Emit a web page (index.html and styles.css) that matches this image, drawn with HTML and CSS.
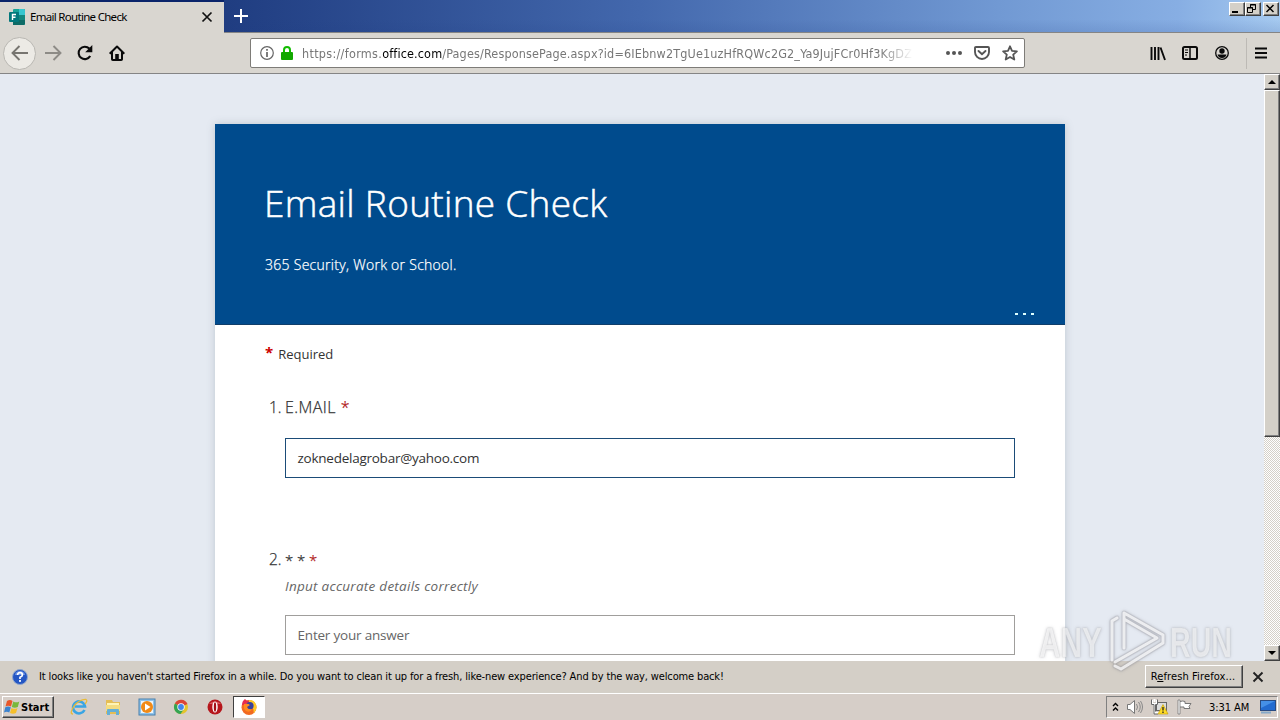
FILE: index.html
```html
<!DOCTYPE html>
<html lang="en">
<head>
<meta charset="utf-8">
<title>Email Routine Check</title>
<link rel="stylesheet" href="styles.css">
</head>
<body>
<div class="screen">
  <header class="tabbar">
    <div class="tab">
      <svg class="tab-icon" width="16" height="16" viewBox="0 0 16 16"><rect x="4" width="12" height="16" rx="1" fill="#17a398"/><path d="M10 0h5l1 1v5h-6z" fill="#37c6d0"/><path d="M10 6h6v5h-6z" fill="#13877f"/><path d="M4 11h12v4l-1 1H4z" fill="#0d6b66"/><rect y="3" width="10" height="10" rx="1" fill="#03787c"/><path d="M3.5 11V5.5H7M3.5 8.2h3" fill="none" stroke="#fff" stroke-width="1.4"/></svg>
      <span class="tab-title">Email Routine Check</span>
      <svg width="12" height="12" viewBox="0 0 12 12"><path d="M1.5 1.5l9 9m0-9l-9 9" stroke="#111" stroke-width="1.7"/></svg>
    </div>
    <svg class="new-tab" width="16" height="16" viewBox="0 0 16 16"><path d="M8 1v14M1 8h14" stroke="#fff" stroke-width="2"/></svg>
    <div class="window-buttons">
      <span class="win-btn"><svg width="12" height="11" viewBox="0 0 12 11"><path d="M2 9h6" stroke="#000" stroke-width="2"/></svg></span>
      <span class="win-btn"><svg width="12" height="11" viewBox="0 0 12 11"><path d="M4.5 4V1.5h5v5H7M4 2h6M1.5 4.5h5v5h-5zM1 5h6" fill="none" stroke="#000"/></svg></span>
      <span class="win-btn win-close"><svg width="12" height="11" viewBox="0 0 12 11"><path d="M2.5 2l7 7m0-7l-7 7" stroke="#000" stroke-width="1.5"/></svg></span>
    </div>
  </header>

  <nav class="toolbar">
    <div class="nav-buttons">
      <span class="back"><svg width="18" height="16" viewBox="0 0 18 16"><path d="M17 8H2m6.500-7L1.500 8l7 7" fill="none" stroke="#777570" stroke-width="1.900"/></svg></span>
      <svg width="18" height="16" viewBox="0 0 18 16"><path d="M1 8h15M9.500 1l7 7-7 7" fill="none" stroke="#8d8b86" stroke-width="1.900"/></svg>
      <svg width="16" height="16" viewBox="0 0 16 16"><path d="M13.200 11A6.200 6.200 0 1 1 12.300 3.600" fill="none" stroke="#0a0a0a" stroke-width="2.100"/><path d="M15.300 0v7.300H8.200z" fill="#0a0a0a"/></svg>
      <svg width="16" height="16" viewBox="0 0 16 16"><path d="M.7 8.800L8 1.500l7.300 7.300" fill="none" stroke="#0a0a0a" stroke-width="2" stroke-linejoin="round"/><path d="M3 7v7.200q0 .8.800.8h8.400q.8 0 .8-.8V7" fill="none" stroke="#0a0a0a" stroke-width="2"/><path d="M6.200 15V9h3.600v6z" fill="#0a0a0a"/></svg>
    </div>
    <div class="urlbar">
      <svg width="14" height="14" viewBox="0 0 14 14"><circle cx="7" cy="7" r="6.300" fill="none" stroke="#666" stroke-width="1.200"/><path d="M7 3v1.700M7 6v5" stroke="#666" stroke-width="1.700"/></svg>
      <svg width="12" height="14" viewBox="0 0 12 14"><path d="M3 7V4a3 3 0 0 1 6 0v3" fill="none" stroke="#12bc00" stroke-width="2"/><rect y="6" width="12" height="8" rx="1" fill="#12a800"/></svg>
      <span class="url"><span class="url-a">https://forms.</span><span class="domain">office.com</span><span class="url-b">/Pages/ResponsePage.aspx?id=6IEbnw2TgUe1uzHfRQWc2G2_Ya9JujFCr0Hf3KgDZ</span></span>
      <svg width="16" height="4" viewBox="0 0 16 4"><circle cx="2" cy="2" r="2" fill="#555"/><circle cx="8" cy="2" r="2" fill="#555"/><circle cx="14" cy="2" r="2" fill="#555"/></svg>
      <svg width="16" height="14" viewBox="0 0 16 14"><path d="M2 1h12q1 0 1 1v4a7 7 0 0 1-14 0V2q0-1 1-1z" fill="none" stroke="#555" stroke-width="1.900"/><path d="M4.500 5L8 8.300 11.500 5" fill="none" stroke="#555" stroke-width="1.900" stroke-linecap="round"/></svg>
      <svg width="16" height="16" viewBox="0 0 16 16"><path d="M8 1.300l2 4.500 4.900.5-3.700 3.300 1.100 4.900L8 12l-4.300 2.500 1.100-4.900L1.100 6.300 6 5.800z" fill="none" stroke="#555" stroke-width="1.800" stroke-linejoin="round"/></svg>
    </div>
    <div class="tools">
      <svg width="16" height="16" viewBox="0 0 16 16"><path d="M1.500 2v13M5 2v13M8.500 2v13M10.500 2.500L15 15" stroke="#0a0a0a" stroke-width="1.900"/></svg>
      <svg width="16" height="14" viewBox="0 0 16 14"><rect x="1" y="1" width="14" height="12" rx="1.500" fill="none" stroke="#0a0a0a" stroke-width="2"/><path d="M8 1v12" stroke="#0a0a0a" stroke-width="1.500"/><path d="M3 4h3M3 6.500h3M3 9h2" stroke="#0a0a0a"/></svg>
      <svg width="14" height="14" viewBox="0 0 14 14"><circle cx="7" cy="7" r="6.300" fill="none" stroke="#0a0a0a" stroke-width="1.300"/><circle cx="7" cy="5" r="2.700" fill="#0a0a0a"/><path d="M2.500 8.500h9Q10.500 12 7 12T2.500 8.500z" fill="#0a0a0a"/></svg>
      <span class="tool-divider"></span>
      <svg width="12" height="12" viewBox="0 0 12 12"><path d="M0 1.500h12M0 6h12M0 10.500h12" stroke="#0a0a0a" stroke-width="1.900"/></svg>
    </div>
  </nav>

  <div class="viewport">
    <main class="page">
      <section class="form">
        <div class="banner">
          <h1><span>Email Routine Check</span></h1>
          <p class="subtitle">365 Security, Work or School.</p>
          <div class="more"><i></i><i></i><i></i></div>
        </div>
        <div class="form-body">
          <p class="required"><b class="star">*</b><span>Required</span></p>
          <div class="question">
            <span class="number">1.</span>
            <div class="question-main">
              <div class="label"><span class="label-email">E.MAIL</span> <span class="star-thin">*</span></div>
              <div class="field active"><span class="value">zoknedelagrobar@yahoo.com</span></div>
            </div>
          </div>
          <div class="question second">
            <span class="number">2.</span>
            <div class="question-main">
              <div class="label stars">* * <span class="star-thin">*</span></div>
              <div class="hint">Input accurate details correctly</div>
              <div class="field"><span class="placeholder">Enter your answer</span></div>
            </div>
          </div>
        </div>
      </section>
    </main>
    <aside class="scrollbar">
      <span class="scroll-btn"><svg width="8" height="4" viewBox="0 0 8 4"><path d="M0 4l4-4 4 4z"/></svg></span>
      <span class="thumb"></span>
      <span class="track"></span>
      <span class="scroll-btn"><svg width="8" height="4" viewBox="0 0 8 4"><path d="M0 0l4 4 4-4z"/></svg></span>
    </aside>
  </div>

  <div class="notice">
    <svg width="16" height="16" viewBox="0 0 16 16"><circle cx="8" cy="8" r="7.500" fill="#2456c4" stroke="#8fa6cc"/><path d="M3 6a5 4 0 0 1 10 0z" fill="#6b93e6"/><path d="M5.600 6Q5.600 3.700 8 3.700T10.400 6Q10.400 7.300 8 8.300V10" fill="none" stroke="#fff" stroke-width="1.700"/><rect x="7.100" y="11" width="1.800" height="1.900" fill="#fff"/></svg>
    <span class="notice-text">It looks like you haven't started Firefox in a while. Do you want to clean it up for a fresh, like-new experience? And by the way, welcome back!</span>
    <span class="refresh"><span class="refresh-text">R<u>e</u>fresh Firefox...</span></span>
    <svg class="notice-close" width="12" height="12" viewBox="0 0 12 12"><path d="M1.500 1.500l9 9m0-9l-9 9" stroke="#222" stroke-width="1.900"/></svg>
  </div>

  <footer class="taskbar">
    <div class="start">
      <svg width="16" height="16" viewBox="0 0 16 16"><path d="M3 2q3-2 5.500 0L7 7.500q-3-1.500-5.500 0z" fill="#e8572a"/><path d="M9.300 2.500q3 1.700 6 0L13.800 8q-3 1.500-6 0z" fill="#79b83b"/><path d="M1.300 8.300q2.700-1.500 5.500 0L5.300 13.500q-2.700-1.600-5.300 0z" fill="#3b83cf"/><path d="M7.500 9q3 1.700 6 0L12 14q-3 1.600-6 0z" fill="#f5bf2b"/></svg>
      <span>Start</span>
    </div>
    <div class="apps">
      <svg width="18" height="18" viewBox="0 0 18 18"><path d="M14.500 12A6 6 0 1 1 15 8.500H5" fill="none" stroke="#3aa5e4" stroke-width="2.600"/><path d="M3 16Q-1 16 4 8 10 1 16 1.500q2 1-1 4.500" fill="none" stroke="#e8bb37" stroke-width="1.300"/></svg>
      <svg width="18" height="18" viewBox="0 0 18 18"><path d="M2 2h6l1 2h7v12H2z" fill="#e5bd55"/><path d="M3 5h12v6H3z" fill="#fff4b5"/><path d="M2 7h14v6H2z" fill="#f4dc81"/><path d="M3 17v-5q0-1 1-1h10q1 0 1 1v5h-3v-3H6v3z" fill="#65afd5"/></svg>
      <svg width="18" height="18" viewBox="0 0 18 18"><rect x="1" y="1" width="16" height="16" fill="#8fc4ec" stroke="#477fac"/><rect x="3" y="3" width="12" height="12" fill="#eef5fa"/><circle cx="9" cy="9" r="6" fill="#f18a16"/><path d="M7 5.500L12.500 9 7 12.500z" fill="#fff"/></svg>
      <svg width="18" height="18" viewBox="0 0 18 18"><circle cx="9" cy="9" r="7" fill="#e4c42e"/><path d="M9 9L2.900 5.500A7 7 0 0 1 15.500 6z" fill="#dc4538"/><path d="M9 9L2.900 5.500A7 7 0 0 0 8.500 16L12 11z" fill="#35a453"/><circle cx="9" cy="9" r="3.700" fill="#fff"/><circle cx="9" cy="9" r="2.900" fill="#4386ec"/></svg>
      <svg width="18" height="18" viewBox="0 0 18 18"><circle cx="9" cy="9" r="7.500" fill="#b6161c"/><path d="M3 6a7 5 0 0 1 12 0z" fill="#d7575b"/><ellipse cx="9" cy="9" rx="2.700" ry="5.500" fill="#fff"/><ellipse cx="9" cy="9" rx="1.200" ry="4.800" fill="#a40f15"/></svg>
      <span class="app-active"><svg width="18" height="18" viewBox="0 0 18 18"><circle cx="9" cy="9.500" r="7.500" fill="#f26a21"/><path d="M9 2q7 0 7.500 7 0 4-3 6 1-6-4.500-8z" fill="#ffc928"/><path d="M2 7q0-4 3-6 1 2 4 2l-2 4z" fill="#e72c4e"/><circle cx="9.800" cy="7.800" r="3.800" fill="#39419d"/><path d="M4 6q4-1 6 1l-3 2q1 3 5 2-2 4-6 2-3-2-2-7z" fill="#ff8a20"/></svg></span>
    </div>
    <div class="tray">
      <svg width="7" height="10" viewBox="0 0 7 10"><path d="M1 4l2.500-2.500L6 4M1 8.500L3.500 6 6 8.500" fill="none" stroke="#000" stroke-width="1.400"/></svg>
      <svg width="18" height="16" viewBox="0 0 18 16"><path d="M1.500 5.500H4L8.500 1.500v13L4 10.500H1.500z" fill="#fff" stroke="#777"/><path d="M10.500 5q2 3 0 6M12.500 3q3.500 5 0 10M14.500 2q4 6 0 12" fill="none" stroke="#888"/></svg>
      <svg width="18" height="16" viewBox="0 0 18 16"><rect x="5.500" y="3.500" width="10" height="8" fill="#ddd" stroke="#666"/><path d="M1 1v4h5V1M3.500 5v9H9M3.500 0v3" fill="none" stroke="#fff" stroke-width="2"/><path d="M.5.500v5H3v9.500h4M6.500.500v5H4.500v7" fill="none" stroke="#666"/><path d="M12 5.500L17 15H7z" fill="#ffdc26" stroke="#c39b00" stroke-width=".6"/><path d="M12 8v3.500m0 1v1.500" stroke="#222" stroke-width="1.300"/></svg>
      <svg width="18" height="16" viewBox="0 0 18 16"><path d="M4 2.500q3-1 5 0v2h6l-2 3 1 2H8V8H4" fill="#fff" stroke="#777"/><path d="M2 1h2v14H2z" fill="#fff" stroke="#777" stroke-width=".8"/></svg>
      <span class="clock">3:31 AM</span>
      <svg width="16" height="14" viewBox="0 0 16 14"><rect x=".5" y=".5" width="15" height="10" fill="#236bd0" stroke="#294b82"/><path d="M1 1h14L1 8z" fill="#4590e8"/><path d="M1 12.500h10" stroke="#85a8c8" stroke-width="2"/></svg>
    </div>
  </footer>

  <svg class="watermark" width="240" height="80" viewBox="0 0 240 80">
    <g class="mark-text"><text x="3" y="51" textLength="63" lengthAdjust="spacingAndGlyphs">ANY</text><text x="134" y="51" textLength="62" lengthAdjust="spacingAndGlyphs">RUN</text></g>
    <g fill="none" stroke-linejoin="round" stroke-linecap="round"><path d="M88 42V13l33 19-42 24M76 54V15l5-3M88 13V7l39 22v8L85 63l-6-3" stroke="#a8aaae" stroke-opacity=".3" stroke-width="5"/><path d="M88 42V13l33 19-42 24M76 54V15l5-3M88 13V7l39 22v8L85 63l-6-3" stroke="#fff" stroke-opacity=".75" stroke-width="3"/></g>
  </svg>
</div>
</body>
</html>
```
FILE: styles.css
```css
* { box-sizing: border-box; }
body { margin: 0; font-family: "DejaVu Sans Condensed", "DejaVu Sans", sans-serif; font-size: 11px; color: #000; }
svg { display: block; flex: none; }
.screen { position: relative; width: 1280px; height: 720px; overflow: hidden; display: flex; flex-direction: column; background: #d6d0c8; }

.tabbar { flex: none; height: 33px; display: flex; align-items: flex-start; background: linear-gradient(to bottom, transparent 0 60%, rgba(30,60,130,.12)), linear-gradient(to right, #0a246a 0, #1f3c80 17%, #4368ad 50%, #7199d3 78%, #87aee3 92%, #a6caf0); border-bottom: 1px solid #858585; }
.tab { width: 224px; height: 33px; margin-bottom: -1px; padding: 0 11px 1px 9px; display: flex; align-items: center; background: #d9d6d0; border-top: 2px solid #0a246a; }
.tab-icon { margin-right: 5px; }
.tab-title { flex: 1; margin-top: -2px; font-family: "Noto Sans", sans-serif; font-size: 11.5px; letter-spacing: -.7px; white-space: nowrap; }
.new-tab { margin: 8px 0 0 9px; }
.window-buttons { margin: 2px 1px 0 auto; display: flex; }
.win-btn { width: 16px; height: 14px; background: #d4d0c8; border: 1px solid; border-color: #fff #404040 #404040 #fff; box-shadow: inset -1px -1px #808080; }
.win-close { margin-left: 2px; }

.toolbar { flex: none; height: 41px; display: flex; align-items: center; background: #d9d6d0; border-bottom: 1px solid #858585; }
.nav-buttons { width: 250px; padding-left: 3px; display: flex; align-items: center; gap: 15px; }
.back { width: 33px; height: 33px; margin-right: -7px; border: 1px solid #b9b7b2; border-radius: 50%; background: #eceae5; display: flex; align-items: center; justify-content: center; }
.nav-buttons svg:last-child { margin-left: 1px; }
.back svg:last-child { margin-left: 0; }
.urlbar { width: 775px; height: 30px; padding: 0 6px 0 9px; display: flex; align-items: center; background: #fff; border: 1px solid #7e7c78; border-radius: 2px; }
.urlbar svg + svg { margin-left: 7px; }
.url { width: 614px; margin: 0 30px 0 9px; font-size: 12.500px; letter-spacing: .15px; color: #777; white-space: nowrap; overflow: hidden; mask-image: linear-gradient(to right, #000 94%, transparent 99.500%); }
.url-a { letter-spacing: .3px; }
.urlbar .url ~ svg + svg { margin-left: 12px; }
.domain { color: #000; }
.tools { flex: 1; padding: 0 13px 0 0; display: flex; align-items: center; justify-content: flex-end; gap: 16px; }
.tool-divider { width: 1px; height: 31px; margin: 0 -8px 0 0; background: #bdbab5; }
.tools svg:nth-child(3) { margin: 0 1px 0 1px; }

.viewport { flex: none; height: 587px; display: flex; overflow: hidden; }
.page { width: 1264px; padding: 50px 0 0 215px; background: #e5eaf2; overflow: hidden; font-family: "Open Sans", "Noto Sans", sans-serif; }
.form { width: 850px; height: 620px; background: #fff; box-shadow: 0 0 8px rgba(90,110,120,.28); }
.banner { height: 201px; padding: 53px 31px 0 50px; background: #004b8d; color: #fff; border-bottom: 1px solid #103e6a; }
h1 { margin: 0 0 0 -1px; height: 54px; font-size: 37px; line-height: 52px; font-weight: 300; letter-spacing: .3px; white-space: nowrap; -webkit-text-stroke: .5px #fff; }
.subtitle { margin: 24px 0 0; font-size: 14px; line-height: 20px; letter-spacing: .28px; font-weight: 300; -webkit-text-stroke: .25px #fff; }
.more { height: 2px; margin-top: 38px; display: flex; justify-content: flex-end; gap: 5px; }
.more i { width: 3px; height: 2px; background: #dff; }
.form-body { padding: 19px 50px 0; color: #333; }
.required { margin: 0; height: 20px; display: flex; align-items: center; gap: 5px; font-size: 13px; line-height: 20px; }
.star { color: #c00; font-size: 15px; line-height: 16px; margin: -5px 0 0; }
.question { margin-top: 32px; display: flex; }
.number { width: 20px; padding-left: 4px; font-size: 15.500px; line-height: 23px; font-weight: 300; white-space: nowrap; -webkit-text-stroke: .25px #333; }
.question-main { flex: 1; }
.label { height: 24px; font-size: 16px; line-height: 22px; font-weight: 300; letter-spacing: .45px; white-space: nowrap; -webkit-text-stroke: .25px; }
.star-thin { color: #b01818; }
.stars { font-size: 15px; line-height: 24px; letter-spacing: -.1px; }
.field { height: 40px; padding: 0 11.500px; display: flex; align-items: center; border: 1px solid #a09e9c; font-size: 13.500px; }
.value { letter-spacing: -.25px; }
.active { margin-top: 18px; border-color: #1b4c78; }
.second { margin-top: 70px; }
.hint { height: 20px; margin: 4px 0 19px; font-size: 13.500px; line-height: 20px; letter-spacing: .27px; font-style: italic; color: #666; white-space: nowrap; }
.placeholder { color: #666; letter-spacing: -.2px; }
.scrollbar { width: 16px; display: flex; flex-direction: column; background: #e9e6e1; }
.scroll-btn, .thumb { flex: none; background: #d4d0c8; border: 1px solid; border-color: #fff #404040 #404040 #fff; box-shadow: inset -1px -1px #808080; }
.scroll-btn { height: 16px; display: flex; align-items: center; justify-content: center; }
.thumb { height: 347px; }
.track { flex: 1; background: repeating-conic-gradient(#d4d0c8 0 25%, #fff 0 50%) 0 0 / 2px 2px; }

.notice { flex: none; height: 31px; padding: 0 16px 0 12px; display: flex; align-items: center; background: #d4cfc7; }
.notice-text { flex: 1; margin-left: 11px; letter-spacing: -.14px; white-space: nowrap; }
.refresh { width: 98px; height: 23px; margin-top: -1px; display: flex; align-items: center; justify-content: center; border: 1px solid; border-color: #fff #404040 #404040 #fff; box-shadow: inset -1px -1px #808080; }
.refresh-text { letter-spacing: .12px; margin-left: -2px; white-space: nowrap; }
.notice-close { margin-left: 9px; }

.taskbar { flex: none; height: 28px; border-top: 1px solid #d4d0c8; box-shadow: inset 0 1px #fff; padding: 3px 2px 2px; display: flex; background: #d6cec8; }
.start { width: 52px; height: 22px; padding-left: 1px; display: flex; align-items: center; gap: 1px; font: bold 11px "DejaVu Sans Condensed", "DejaVu Sans", sans-serif; border: 1px solid; border-color: #fff #404040 #404040 #fff; box-shadow: inset -1px -1px #808080; }
.apps { margin-left: 16px; display: flex; align-items: center; gap: 16px; }
.app-active { width: 32px; height: 22px; margin-left: -7px; display: flex; align-items: center; justify-content: center; background: #fff; border: 1px solid; border-color: #404040 #fff #fff #404040; }
.tray { width: 172px; height: 22px; margin-left: auto; padding: 0 1px 0 5px; display: flex; align-items: center; border: 1px solid; border-color: #808080 #fff #fff #808080; }
.tray svg + svg { margin-left: 7px; }
.clock { flex: 1; margin-left: 15px; letter-spacing: -.05px; white-space: nowrap; }
.watermark { position: absolute; left: 1036px; top: 606px; filter: drop-shadow(0 0 1.500px rgba(100,100,110,.5)); }
.mark-text { font: bold 42px "Liberation Sans", sans-serif; fill: rgba(255,255,255,.6); stroke: rgba(190,192,196,.35); stroke-width: .7; }
```
